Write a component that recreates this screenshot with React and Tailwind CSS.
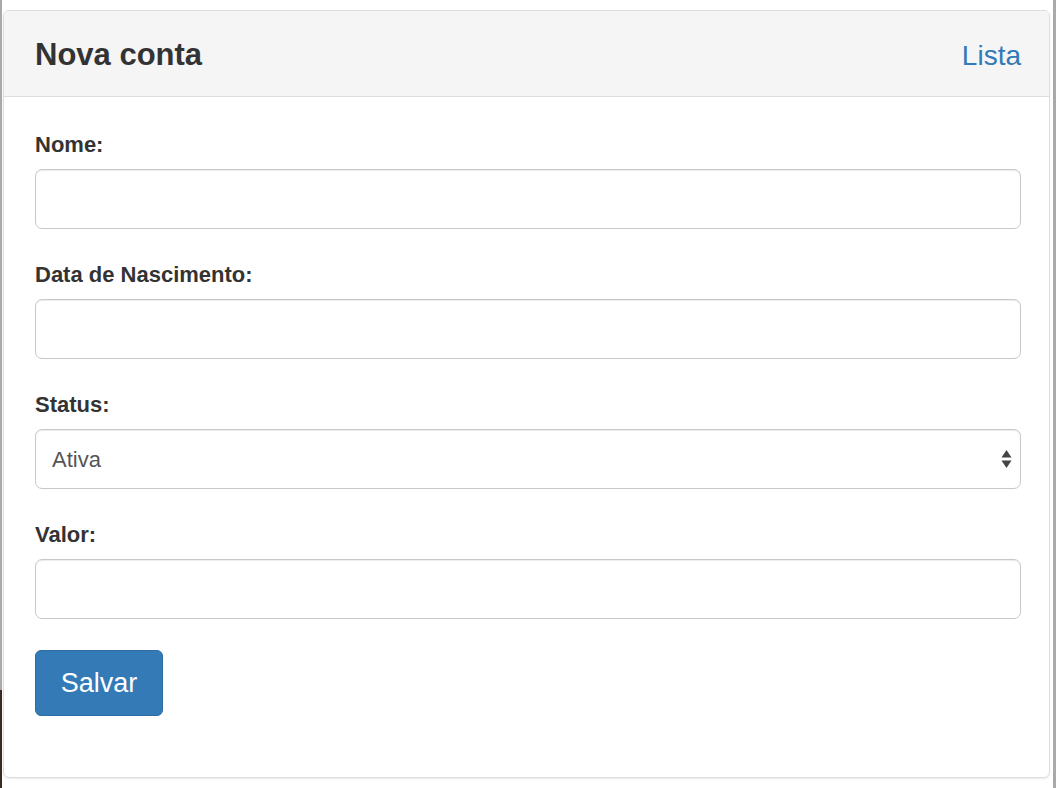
export default function App() {
  const font = { fontFamily: '"Liberation Sans", Arial, Helvetica, sans-serif' };

  const fields = [
    { label: "Nome:", type: "input" },
    { label: "Data de Nascimento:", type: "input" },
    { label: "Status:", type: "select" },
    { label: "Valor:", type: "input" },
  ];

  return (
    <div className="flex h-[788px] w-[1058px] bg-white overflow-hidden" style={font}>
      {/* page behind, left edge */}
      <div className="flex w-[3px] flex-col">
        <div className="w-[2px] flex-1 bg-[#a9a9a9]" />
        <div className="w-[2px] h-[98px] bg-[#3a2a26]" />
      </div>

      {/* panel */}
      <div className="w-[1047px] pt-[10px]">
        <div className="flex h-[768px] flex-col rounded-[6px] border border-[#dddddd] bg-white shadow-[0_1px_2px_rgba(0,0,0,0.08)]">
          <div className="flex h-[86px] items-baseline justify-between rounded-t-[5px] border-b border-[#dddddd] bg-[#f5f5f5] pl-[31px] pr-[28px] pt-[24px]">
            <h3 className="text-[31px] font-bold leading-[40px] text-[#333333]">Nova conta</h3>
            <a className="text-[28px] leading-[40px] text-[#337ab7]" href="#">
              Lista
            </a>
          </div>

          <form className="flex flex-col pl-[31px] pr-[28px] pt-[33px]">
            {fields.map((f) => (
              <div key={f.label} className="mb-[31px] flex flex-col">
                <label className="mb-[9px] text-[22px] font-bold leading-[30px] text-[#333333]">
                  {f.label}
                </label>
                {f.type === "input" ? (
                  <input
                    type="text"
                    className="h-[60px] w-full rounded-[7px] border border-[#c8c8c8] bg-white px-[16px] text-[22px] text-[#555555] shadow-[inset_0_1px_1px_rgba(0,0,0,0.075)] outline-none"
                  />
                ) : (
                  <div className="flex h-[60px] w-full items-center justify-between rounded-[7px] border border-[#c8c8c8] bg-white pl-[16px] pr-[8px] text-[22px] text-[#555555] shadow-[inset_0_1px_1px_rgba(0,0,0,0.075)]">
                    <span>Ativa</span>
                    <svg width="11" height="20" viewBox="0 0 11 20">
                      <polygon points="5.5,1 10.5,8.5 0.5,8.5" fill="#444444" />
                      <polygon points="0.5,11.5 10.5,11.5 5.5,19" fill="#444444" />
                    </svg>
                  </div>
                )}
              </div>
            ))}
            <div>
              <button
                type="button"
                className="h-[66px] w-[128px] rounded-[6px] border border-[#2e6da4] bg-[#337ab7] text-[27px] text-white"
              >
                Salvar
              </button>
            </div>
          </form>
        </div>
      </div>

      {/* page behind, right edge */}
      <div className="w-[3px]" />
      <div className="w-[3px] bg-[#a9a9a9]" />
      <div className="flex-1 bg-white" />
    </div>
  );
}
